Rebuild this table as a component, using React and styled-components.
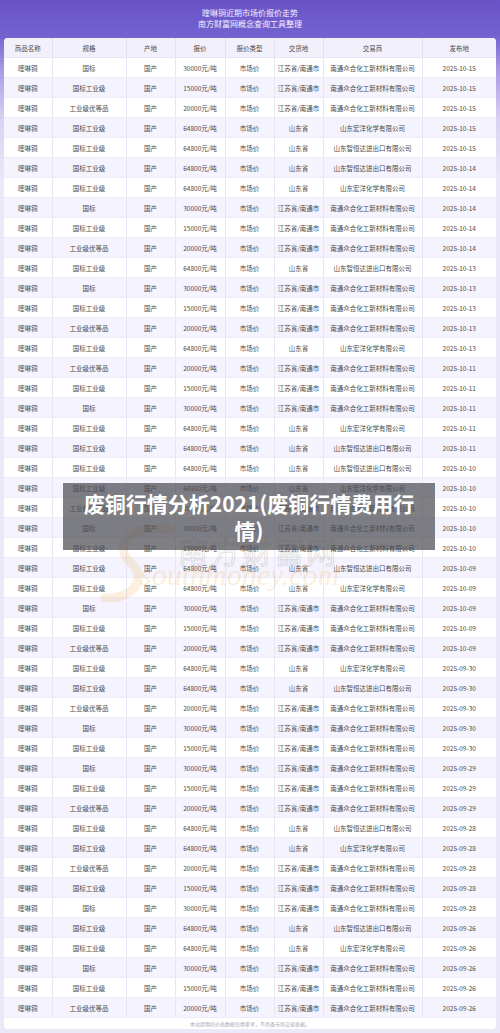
import React from 'react';
import styled, { createGlobalStyle } from 'styled-components';

const GlobalStyle = createGlobalStyle`
  html, body {
    margin: 0;
    padding: 0;
    background: #ebe8f8;
  }
  body {
    font-family: "Noto Sans CJK SC", "Noto Sans", sans-serif;
  }
`;

const Page = styled.div`
  position: relative;
  width: 500px;
  height: 1033px;
  overflow: hidden;
  box-sizing: border-box;
  padding: 0 4px;
  background: linear-gradient(180deg, #6953c6 0px, #7462d0 36px, #a99ae6 70px, #d9d2f4 120px, #ebe8f8 180px, #ebe8f8 100%);
`;

const Banner = styled.div`
  height: 38px;
  display: flex;
  flex-direction: column;
  align-items: center;
  justify-content: center;
  padding-bottom: 2px;
  box-sizing: border-box;
  color: #f3f0ff;
  font-size: 8px;
  line-height: 11px;
`;

const Card = styled.div`
  background: #ffffff;
  border-radius: 4px;
  overflow: hidden;
`;

const Table = styled.table`
  width: 100%;
  border-collapse: collapse;
  table-layout: fixed;
  font-size: 6.5px;
  line-height: 8px;
  color: #4a4a4a;
`;

const HeadCell = styled.th`
  height: 19px;
  padding: 0;
  font-weight: normal;
  text-align: center;
  background: #f2f0fb;
  border-right: 1px solid #e4e0f4;
  border-bottom: 1px solid #e8e5f6;
  &:last-child { border-right: none; }
`;

const Row = styled.tr`
  background: ${(p) => (p.$alt ? '#f5f3fd' : '#ffffff')};
`;

const Cell = styled.td`
  height: 19px;
  padding: 0;
  text-align: center;
  white-space: nowrap;
  border-right: 1px solid #e8e5f6;
  border-bottom: 1px solid #eeecf8;
  &:last-child { border-right: none; }
`;

const Footer = styled.div`
  height: 11px;
  display: flex;
  align-items: center;
  justify-content: center;
  font-size: 5px;
  color: #a8a8b0;
  background: #ffffff;
`;

const Watermark = styled.div`
  position: absolute;
  left: 100px;
  top: 522px;
  width: 260px;
  height: 80px;
  pointer-events: none;
`;

const MarkCn = styled.div`
  position: absolute;
  left: 78px;
  top: 6px;
  font-size: 30px;
  letter-spacing: 2px;
  color: transparent;
  -webkit-text-stroke: 1px rgba(120, 120, 120, 0.22);
`;

const MarkEn = styled.div`
  position: absolute;
  left: 40px;
  top: 36px;
  font-family: "Liberation Serif", serif;
  font-style: italic;
  font-size: 30px;
  color: rgba(236, 170, 70, 0.2);
`;

const Overlay = styled.div`
  position: absolute;
  left: 63px;
  top: 483px;
  width: 372px;
  height: 67px;
  box-sizing: border-box;
  padding: 0 12px;
  display: flex;
  align-items: center;
  justify-content: center;
  text-align: center;
  background: rgba(78, 78, 84, 0.72);
  color: #ffffff;
  font-size: 21px;
  font-weight: bold;
  line-height: 27px;
`;

const columns = [
  { title: '商品名称', width: 48 },
  { title: '规格', width: 74 },
  { title: '产地', width: 49 },
  { title: '报价', width: 50 },
  { title: '报价类型', width: 49 },
  { title: '交货地', width: 49 },
  { title: '交易商', width: 99 },
  { title: '发布地', width: 74 },
];

const JS = ['江苏省/南通市', '南通众合化工新材料有限公司'];
const HY = ['山东省', '山东宏洋化学有限公司'];
const ZH = ['山东省', '山东智恒达进出口有限公司'];

const GB = ['国标', '30000元/吨', JS];
const GY = ['国标工业级', '15000元/吨', JS];
const YD = ['工业级优等品', '20000元/吨', JS];
const H = ['国标工业级', '64800元/吨', HY];
const Z = ['国标工业级', '64800元/吨', ZH];

const plan = [
  ['2025-10-15', [GB, GY, YD, H, Z]],
  ['2025-10-14', [Z, H, GB, GY, YD]],
  ['2025-10-13', [Z, GB, GY, YD, H]],
  ['2025-10-11', [YD, GY, GB, H, Z]],
  ['2025-10-10', [Z, H, YD, GB, GY]],
  ['2025-10-09', [Z, H, GB, GY, YD]],
  ['2025-09-30', [H, Z, YD, GB, GY]],
  ['2025-09-29', [GB, GY, YD]],
  ['2025-09-28', [Z, H, YD, GY, GB]],
  ['2025-09-26', [Z, H, GB, GY, YD]],
];

const rows = plan.flatMap(([date, items]) =>
  items.map(([spec, price, [place, dealer]]) => [
    '喹啉铜', spec, '国产', price, '市场价', place, dealer, date,
  ]),
);

const App = () => (
  <>
    <GlobalStyle />
    <Page>
      <Banner>
        <div>喹啉铜近期市场价报价走势</div>
        <div>南方财富网概念查询工具整理</div>
      </Banner>
      <Card>
        <Table>
          <colgroup>
            {columns.map((c) => <col key={c.title} style={{ width: c.width }} />)}
          </colgroup>
          <thead>
            <tr>
              {columns.map((c) => <HeadCell key={c.title}>{c.title}</HeadCell>)}
            </tr>
          </thead>
          <tbody>
            {rows.map((r, i) => (
              <Row key={i} $alt={i % 2 === 1}>
                {r.map((v, j) => <Cell key={j}>{v}</Cell>)}
              </Row>
            ))}
          </tbody>
        </Table>
        <Footer>本站提供的价格数据仅供参考，不具备市场交易依据。</Footer>
      </Card>
      <Watermark>
        <svg width="90" height="80" viewBox="0 0 90 80" style={{ position: 'absolute', left: 0, top: 0 }}>
          <path d="M70 8 C40 0 10 20 30 40 C50 58 30 78 5 76" fill="none" stroke="rgba(236,170,70,0.18)" strokeWidth="9" strokeLinecap="round" />
        </svg>
        <MarkCn>南方财富网</MarkCn>
        <MarkEn>southmoney.com</MarkEn>
      </Watermark>
      <Overlay>废铜行情分析2021(废铜行情费用行情)</Overlay>
    </Page>
  </>
);

export default App;
